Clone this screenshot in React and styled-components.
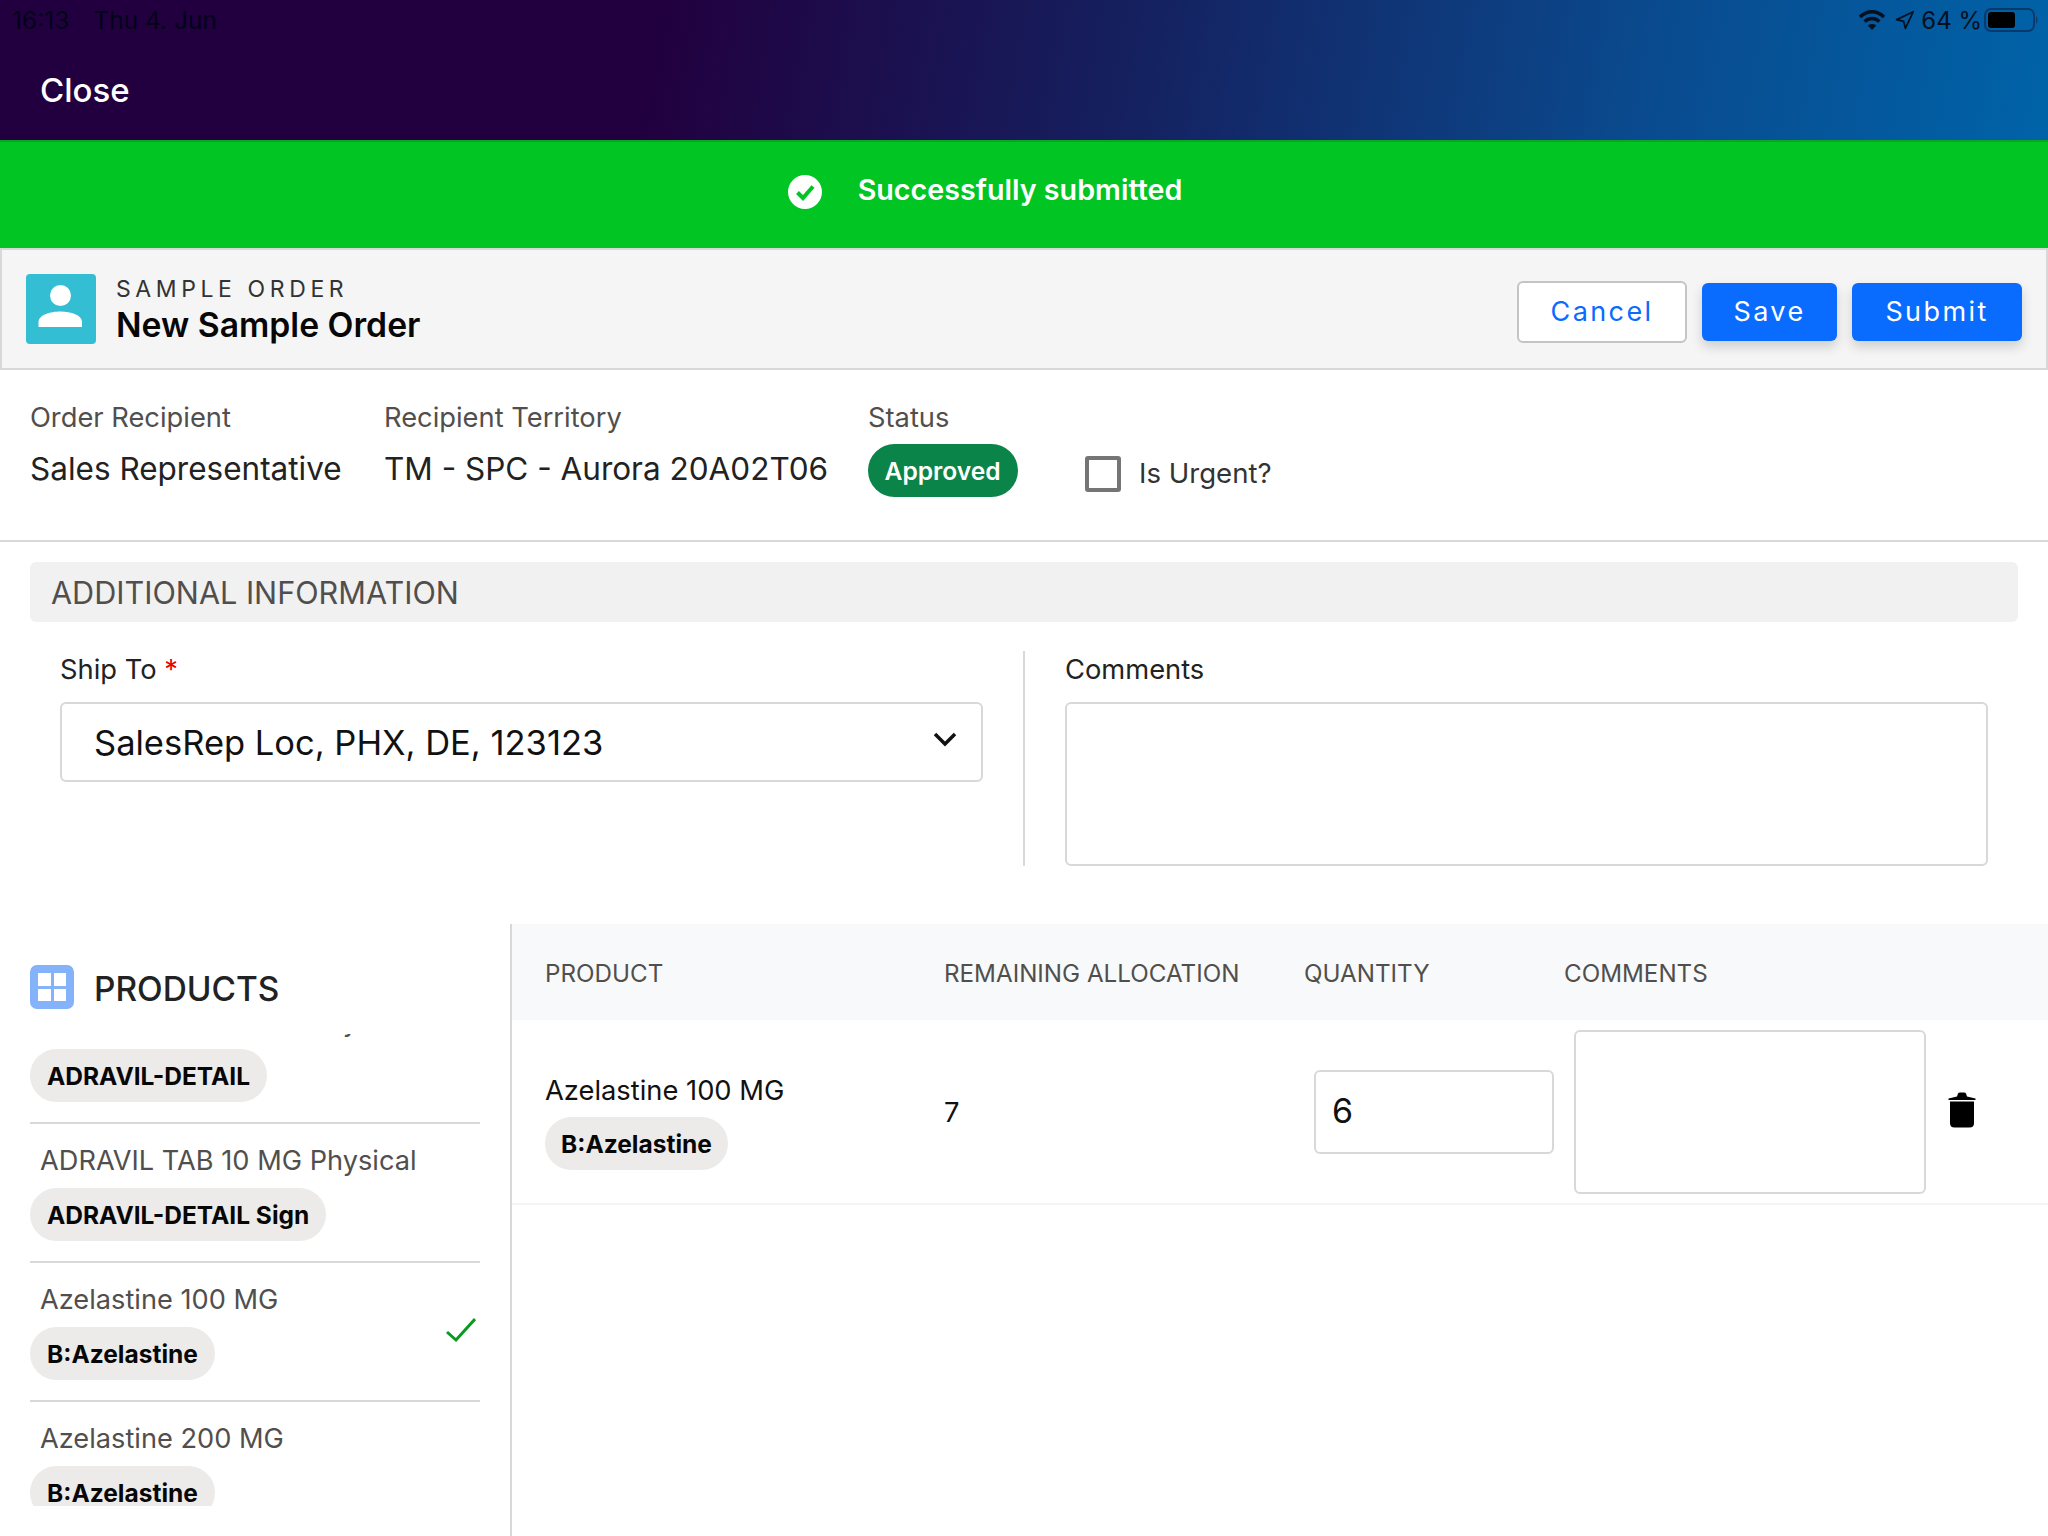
import React from 'react'
import styled, { createGlobalStyle } from 'styled-components'
import { Navigation } from 'lucide-react'

const GlobalStyle = createGlobalStyle`
  html, body { margin: 0; padding: 0; background: #fff; }
  body { font-family: Inter, "Noto Sans", sans-serif; color: #222; }
  * { box-sizing: border-box; }
`

const Page = styled.div`
  width: 2048px;
  height: 1536px;
  overflow: hidden;
  display: flex;
  flex-direction: column;
  background: #fff;
`

const TopBar = styled.header`
  height: 140px;
  flex: none;
  padding: 6px 10px 0 12px;
  background: linear-gradient(100deg, #22003f 0%, #22003f 32%, #15205f 55%, #0a4a8e 80%, #0063a8 100%);
`

const StatusRow = styled.div`
  display: flex;
  justify-content: space-between;
  align-items: center;
  height: 28px;
  font-size: 24px;
  color: #03031a;
`

const StatusLeft = styled.div`
  display: flex;
  gap: 24px;
  font-size: 24.5px;
`

const StatusRight = styled.div`
  display: flex;
  align-items: center;
  gap: 6px;
  color: #05101f;
  svg:nth-child(2) { margin-left: 2px; }
  svg:last-child { margin-left: -4px; }
`

const CloseLink = styled.div`
  margin: 32px 0 0 28px;
  font-size: 33px;
  line-height: 48px;
  font-weight: 500;
  color: #fff;
`

const Banner = styled.div`
  height: 108px;
  flex: none;
  display: flex;
  align-items: center;
  justify-content: center;
  gap: 36px;
  padding: 0 78px 12px 0;
  background: #00c522;
  border-top: 2px solid #0aa522;
  color: #fff;
  font-size: 28.7px;
  font-weight: 600;
  svg { margin-top: 6px; }
`

const CardHeader = styled.div`
  height: 122px;
  flex: none;
  display: flex;
  align-items: center;
  justify-content: space-between;
  padding: 0 24px;
  background: #f5f5f5;
  border: 2px solid #d8d8d8;
  border-top-width: 2px;
`

const TitleGroup = styled.div`
  display: flex;
  align-items: center;
  gap: 20px;
`

const TitleText = styled.div`
  display: flex;
  flex-direction: column;
`

const Eyebrow = styled.div`
  font-size: 23px;
  line-height: 30px;
  letter-spacing: 4.6px;
  color: #333;
  padding-top: 2px;
`

const Title = styled.div`
  font-size: 33.7px;
  line-height: 42px;
  font-weight: 600;
  color: #080707;
`

const ButtonRow = styled.div`
  display: flex;
  align-items: center;
  gap: 15px;
  padding-top: 6px;
`

const Button = styled.button`
  height: ${p => (p.$primary ? '58px' : '62px')};
  width: ${p => p.$w}px;
  padding-bottom: 3px;
  font-family: inherit;
  font-size: 27px;
  letter-spacing: 2.4px;
  border-radius: 6px;
  border: ${p => (p.$primary ? 'none' : '2px solid #c4c4c4')};
  background: ${p => (p.$primary ? '#0a6bff' : '#fff')};
  color: ${p => (p.$primary ? '#fff' : '#0a6bff')};
  box-shadow: ${p => (p.$primary ? '0 6px 12px rgba(0,0,0,0.16)' : 'none')};
`

const InfoRow = styled.div`
  height: 172px;
  flex: none;
  display: flex;
  padding: 20px 0 0 30px;
  border-bottom: 2px solid #d8d8d8;
`

const InfoCol = styled.div`
  width: ${p => p.$w}px;
  flex: none;
`

const InfoLabel = styled.div`
  font-size: 27.3px;
  line-height: 56px;
  color: #514f4d;
`

const InfoValue = styled.div`
  font-size: 31.5px;
  line-height: 44px;
  color: #222;
  margin-top: 1px;
`

const StatusPill = styled.div`
  display: inline-flex;
  align-items: center;
  height: 53px;
  padding: 0 17.5px 0 16.5px;
  margin-top: -2px;
  border-radius: 27px;
  background: #0a8449;
  color: #fff;
  font-size: 24.6px;
  font-weight: 600;
`

const UrgentField = styled.label`
  display: flex;
  align-items: center;
  gap: 18px;
  align-self: flex-start;
  margin-top: 66px;
  font-size: 27.6px;
  color: #333;
  span:last-child { margin-top: -2px; }
`

const CheckBox = styled.span`
  width: 36px;
  height: 36px;
  border: 4px solid #757575;
  border-radius: 3px;
  background: #fff;
`

const SectionTitle = styled.div`
  height: 60px;
  flex: none;
  margin: 20px 30px 0;
  padding-left: 21px;
  display: flex;
  align-items: center;
  background: #f1f1f1;
  border-radius: 6px;
  font-size: 30.6px;
  color: #514f4d;
`

const FormGrid = styled.div`
  flex: none;
  display: grid;
  grid-template-columns: 993px 1fr;
  margin: 29px 30px 0;
`

const FormCol = styled.div`
  height: 215px;
  padding: ${p => (p.$right ? '1px 30px 0 40px' : '1px 40px 0 30px')};
  border-left: ${p => (p.$right ? '2px solid #d8d8d8' : 'none')};
`

const FieldLabel = styled.div`
  font-size: 27.3px;
  line-height: 36px;
  color: #222;
  margin-bottom: 14px;
  span { color: #e00; }
`

const SelectBox = styled.div`
  height: 80px;
  display: flex;
  justify-content: space-between;
  padding: 0 24px 0 32px;
  align-items: center;
  border: 2px solid #d8d8d8;
  border-radius: 6px;
  font-size: 34.5px;
  color: #111;
  svg { margin-top: -6px; }
`

const TextBox = styled.div`
  height: ${p => p.$h}px;
  width: ${p => (p.$w ? `${p.$w}px` : 'auto')};
  border: 2px solid #d8d8d8;
  border-radius: 6px;
  background: #fff;
`

const Lower = styled.div`
  flex: 1;
  min-height: 0;
  display: flex;
  margin-top: 58px;
`

const ProductPane = styled.aside`
  width: 512px;
  flex: none;
  padding: 0 30px;
  border-right: 2px solid #d8d8d8;
`

const PaneHead = styled.div`
  height: 110px;
  padding-top: 41px;
  display: flex;
  align-items: flex-start;
  gap: 20px;
  font-size: 33.4px;
  font-weight: 500;
  color: #222;
  span { line-height: 48px; }
`

const PaneIcon = styled.div`
  width: 44px;
  height: 44px;
  padding: 8px;
  display: grid;
  grid-template-columns: 1fr 1fr;
  gap: 3px;
  border-radius: 7px;
  background: #84b2fb;
  i { background: #fff; }
`

const ListClip = styled.div`
  height: 472px;
  overflow: hidden;
`

const ProductList = styled.div`
  margin-top: -49px;
`

const ProductRow = styled.div`
  position: relative;
  height: 139px;
  padding-top: 22px;
  border-bottom: 2px solid #d8d8d8;
`

const ProductName = styled.div`
  padding-left: 10px;
  font-size: 27.2px;
  line-height: 30px;
  color: #514f4d;
`

const Pill = styled.div`
  display: inline-flex;
  align-items: center;
  height: 53px;
  margin-top: 12px;
  padding: 0 17px;
  border-radius: 27px;
  background: #ecebea;
  color: #080707;
  font-size: 24.5px;
  font-weight: 700;
`

const RowCheck = styled.svg`
  position: absolute;
  right: 4px;
  top: 54px;
`

const TablePane = styled.section`
  flex: 1;
  min-width: 0;
`

const TableGrid = styled.div`
  display: grid;
  grid-template-columns: 399px 360px 260px 1fr;
  padding-left: 33px;
  align-items: center;
`

const TableHead = styled(TableGrid)`
  height: 96px;
  padding-top: 2px;
  background: #f8f9fa;
  font-size: 24.2px;
  color: #514f4d;
`

const TableRow = styled(TableGrid)`
  height: 185px;
  border-bottom: 2px solid #f5f5f5;
  font-size: 27.3px;
  color: #111;
`

const ProductCell = styled.div`
  padding-top: 20px;
  div:first-child { line-height: 36px; color: #111; }
`

const RowPill = styled(Pill)`
  margin-top: 8px;
  padding: 0 16px;
`

const AllocCell = styled.div`
  padding-top: 2px;
`

const QtyCell = styled.div`
  padding-left: 10px;
`

const QtyBox = styled(TextBox)`
  display: flex;
  align-items: center;
  padding: 0 0 2px 16px;
  font-size: 34px;
`

const ActionCell = styled.div`
  display: flex;
  align-items: center;
  gap: 22px;
  padding-left: 10px;
  svg { margin-top: -3px; }
`

const WifiIcon = () => (
  <svg width="28" height="22" viewBox="0 0 28 22" fill="none" stroke="#05101f" strokeWidth="3.4">
    <path d="M2 8 C9 1 19 1 26 8" />
    <path d="M6.5 12.5 C11 8.5 17 8.5 21.5 12.5" />
    <path d="M14 21 L9.8 16.6 C12 14.6 16 14.6 18.2 16.6 Z" fill="#05101f" stroke="none" />
  </svg>
)

const Battery = () => (
  <svg width="54" height="24" viewBox="0 0 54 24">
    <rect x="1" y="1" width="49" height="22" rx="6" fill="none" stroke="#0a3a6b" strokeWidth="2" />
    <rect x="4" y="4" width="27" height="16" rx="3" fill="#000" />
    <path d="M52 8 C54 10 54 14 52 16 Z" fill="#0a3a6b" />
  </svg>
)

const Trash = () => (
  <svg width="28" height="36" viewBox="0 0 28 36">
    <path d="M0.500 6.500 L9 4.500 L10 1.500 Q10.500 0.500 12 0.500 L16 0.500 Q17.500 0.500 18 1.500 L19 4.500 L27.500 6.500 L27.500 8 L0.500 8 Z" fill="#000" />
    <path d="M2 9.500 L26 9.500 L26 31 Q26 35.500 21.500 35.500 L6.500 35.500 Q2 35.500 2 31 Z" fill="#000" />
  </svg>
)

const products = [
  { name: 'ADRAVIL TAB 10 MG Physical', tag: 'ADRAVIL-DETAIL' },
  { name: 'ADRAVIL TAB 10 MG Physical', tag: 'ADRAVIL-DETAIL Sign' },
  { name: 'Azelastine 100 MG', tag: 'B:Azelastine', picked: true },
  { name: 'Azelastine 200 MG', tag: 'B:Azelastine' },
]

export default function App() {
  return (
    <Page>
      <GlobalStyle />
      <TopBar>
        <StatusRow>
          <StatusLeft><span>16:13</span><span>Thu 4. Jun</span></StatusLeft>
          <StatusRight>
            <WifiIcon />
            <Navigation size={21} color="#05101f" strokeWidth={2} />
            <span>64 %</span>
            <Battery />
          </StatusRight>
        </StatusRow>
        <CloseLink>Close</CloseLink>
      </TopBar>

      <Banner>
        <svg width="34" height="34" viewBox="0 0 34 34">
          <circle cx="17" cy="17" r="17" fill="#fff" />
          <path d="M9.500 17.500 L15 23 L25 11.500" fill="none" stroke="#00c522" strokeWidth="4" />
        </svg>
        <span>Successfully submitted</span>
      </Banner>

      <CardHeader>
        <TitleGroup>
          <svg width="70" height="70" viewBox="0 0 70 70">
            <rect width="70" height="70" rx="4" fill="#34bed3" />
            <circle cx="34.500" cy="21.500" r="10.500" fill="#fff" />
            <path d="M12.500 53 L12.500 48 C12.500 41 24 37.500 34.500 37.500 C45 37.500 56 41 56 48 L56 53 Z" fill="#fff" />
          </svg>
          <TitleText>
            <Eyebrow>SAMPLE ORDER</Eyebrow>
            <Title>New Sample Order</Title>
          </TitleText>
        </TitleGroup>
        <ButtonRow>
          <Button $w={170}>Cancel</Button>
          <Button $primary $w={135}>Save</Button>
          <Button $primary $w={170}>Submit</Button>
        </ButtonRow>
      </CardHeader>

      <InfoRow>
        <InfoCol $w={354}>
          <InfoLabel>Order Recipient</InfoLabel>
          <InfoValue>Sales Representative</InfoValue>
        </InfoCol>
        <InfoCol $w={484}>
          <InfoLabel>Recipient Territory</InfoLabel>
          <InfoValue>TM - SPC - Aurora 20A02T06</InfoValue>
        </InfoCol>
        <InfoCol $w={217}>
          <InfoLabel>Status</InfoLabel>
          <StatusPill>Approved</StatusPill>
        </InfoCol>
        <UrgentField>
          <CheckBox />
          <span>Is Urgent?</span>
        </UrgentField>
      </InfoRow>

      <SectionTitle>ADDITIONAL INFORMATION</SectionTitle>

      <FormGrid>
        <FormCol>
          <FieldLabel>Ship To <span>*</span></FieldLabel>
          <SelectBox>
            SalesRep Loc, PHX, DE, 123123
            <svg width="24" height="16" viewBox="0 0 24 16" fill="none" stroke="#111" strokeWidth="3.500">
              <path d="M2 3 L12 13 L22 3" />
            </svg>
          </SelectBox>
        </FormCol>
        <FormCol $right>
          <FieldLabel>Comments</FieldLabel>
          <TextBox $h={164} />
        </FormCol>
      </FormGrid>

      <Lower>
        <ProductPane>
          <PaneHead>
            <PaneIcon><i /><i /><i /><i /></PaneIcon>
            <span>PRODUCTS</span>
          </PaneHead>
          <ListClip>
            <ProductList>
              {products.map((p, i) => (
                <ProductRow key={i}>
                  <ProductName>{p.name}</ProductName>
                  <Pill>{p.tag}</Pill>
                  {p.picked && (
                    <RowCheck width="30" height="26" viewBox="0 0 30 26" fill="none" stroke="#0a9a1f" strokeWidth="3">
                      <path d="M1 15 L10 23 L29 2" />
                    </RowCheck>
                  )}
                </ProductRow>
              ))}
            </ProductList>
          </ListClip>
        </ProductPane>

        <TablePane>
          <TableHead>
            <div>PRODUCT</div>
            <div>REMAINING ALLOCATION</div>
            <div>QUANTITY</div>
            <div>COMMENTS</div>
          </TableHead>
          <TableRow>
            <ProductCell>
              <div>Azelastine 100 MG</div>
              <RowPill>B:Azelastine</RowPill>
            </ProductCell>
            <AllocCell>7</AllocCell>
            <QtyCell>
              <QtyBox $h={84} $w={240}>6</QtyBox>
            </QtyCell>
            <ActionCell>
              <TextBox $h={164} $w={352} />
              <Trash />
            </ActionCell>
          </TableRow>
        </TablePane>
      </Lower>
    </Page>
  )
}
